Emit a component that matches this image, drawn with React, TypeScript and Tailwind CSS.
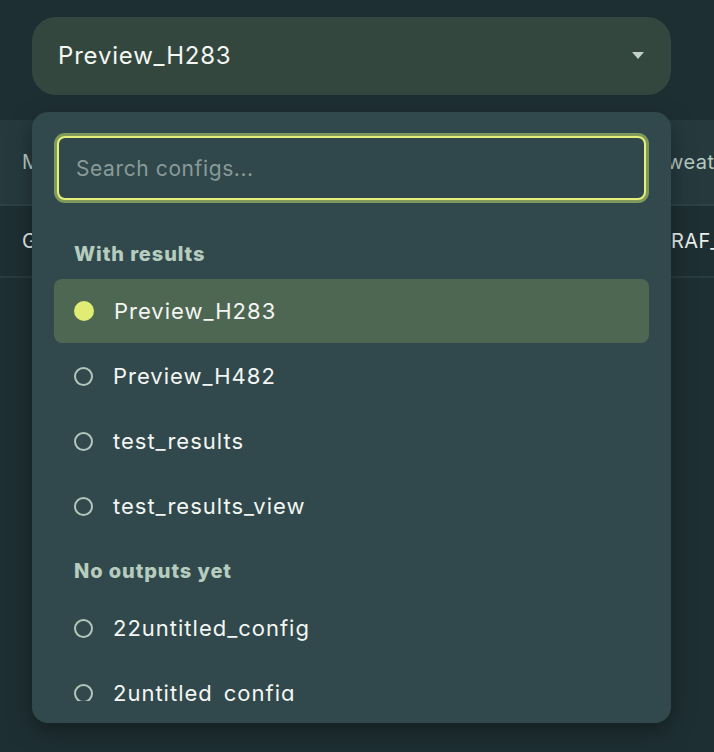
import { useState } from 'react';

type Config = { name: string; hasResults: boolean };

const configs: Config[] = [
  { name: 'Preview_H283', hasResults: true },
  { name: 'Preview_H482', hasResults: true },
  { name: 'test_results', hasResults: true },
  { name: 'test_results_view', hasResults: true },
  { name: '22untitled_config', hasResults: false },
  { name: '2untitled_config', hasResults: false },
  { name: '3untitled_config', hasResults: false },
];

function Caret() {
  return (
    <svg width="12" height="8" viewBox="0 0 12 8" className="text-[#c3cfca]">
      <path d="M0 0h12L6 7z" fill="currentColor" />
    </svg>
  );
}

function ConfigRow({ name, selected, onPick }: { name: string; selected: boolean; onPick: () => void }) {
  return (
    <button
      onClick={onPick}
      className={`w-full h-[64px] shrink-0 flex items-center gap-[20px] px-[20px] rounded-lg text-left ${selected ? 'bg-[#4e6752]' : ''}`}
    >
      {selected
        ? <span className="w-[20px] h-[20px] rounded-full bg-[#e0ec74]" />
        : <span className="w-[19px] h-[19px] rounded-full border-2 border-[#b3c6bc]" />}
      <span className="text-[22px] text-[#f3f6f2] tracking-[1px]">{name}</span>
    </button>
  );
}

export default function App() {
  const [selected, setSelected] = useState('Preview_H283');
  const withResults = configs.filter(c => c.hasResults);
  const noOutputs = configs.filter(c => !c.hasResults);

  return (
    <div className="relative w-[714px] h-[752px] overflow-hidden bg-[#1e2f33]" style={{ fontFamily: 'Inter, "Noto Sans", sans-serif' }}>
      <div className="pt-[17px] pl-8 pr-[43px]">
        <button className="w-full h-[78px] rounded-[24px] bg-[#33473f] flex items-center justify-between pl-[26px] pr-[27px]">
          <span className="text-[24px] text-[#f4f6f2] tracking-[0.8px]">{selected}</span>
          <Caret />
        </button>
      </div>

      <div className="mt-[25px]">
        <div className="h-[86px] bg-[#263a3e] border-b-2 border-[#2d4246] grid grid-cols-[667px_1fr] items-center text-[20px] text-[#b6c9c1] tracking-[0.5px]">
          <span className="pl-[22px]">Model</span>
          <span className="whitespace-nowrap">weather</span>
        </div>
        <div className="h-[72px] border-b-2 border-[#283b3f] grid grid-cols-[656px_1fr] items-center text-[20px] text-[#e8eeea] tracking-[0.5px]">
          <span className="pl-[22px]">GFS</span>
          <span className="whitespace-nowrap">DRAF_1</span>
        </div>
      </div>

      <div className="absolute left-8 top-[112px] w-[639px] h-[611px] rounded-2xl bg-[#31494c] shadow-[0_8px_24px_rgba(0,0,0,0.35)] px-[22px] pt-[21px] pb-[22px] flex flex-col">
        <div className="px-[3px] pt-[3px]">
          <input
            placeholder="Search configs..."
            className="w-full h-[64px] rounded-lg border-2 border-[#e4f07a] ring-[3px] ring-[#7f9a5c] bg-[#30484b] px-[17px] text-[21px] tracking-[0.6px] text-[#f3f6f2] placeholder:text-[#8a9a99] outline-none"
          />
        </div>
        <div className="flex-1 overflow-hidden mt-[34px] flex flex-col">
          <div className="px-[20px] h-[40px] shrink-0 flex items-center text-[20px] font-extrabold text-[#b6ccbf] tracking-[0.9px]">With results</div>
          <div className="mt-[5px] flex flex-col gap-px">
            {withResults.map(c => (
              <ConfigRow key={c.name} name={c.name} selected={c.name === selected} onPick={() => setSelected(c.name)} />
            ))}
          </div>
          <div className="px-[20px] h-[40px] mt-[13px] shrink-0 flex items-center text-[20px] font-extrabold text-[#b6ccbf] tracking-[0.9px]">No outputs yet</div>
          <div className="mt-[5px] flex flex-col gap-px">
            {noOutputs.map(c => (
              <ConfigRow key={c.name} name={c.name} selected={c.name === selected} onPick={() => setSelected(c.name)} />
            ))}
          </div>
        </div>
      </div>
    </div>
  );
}
